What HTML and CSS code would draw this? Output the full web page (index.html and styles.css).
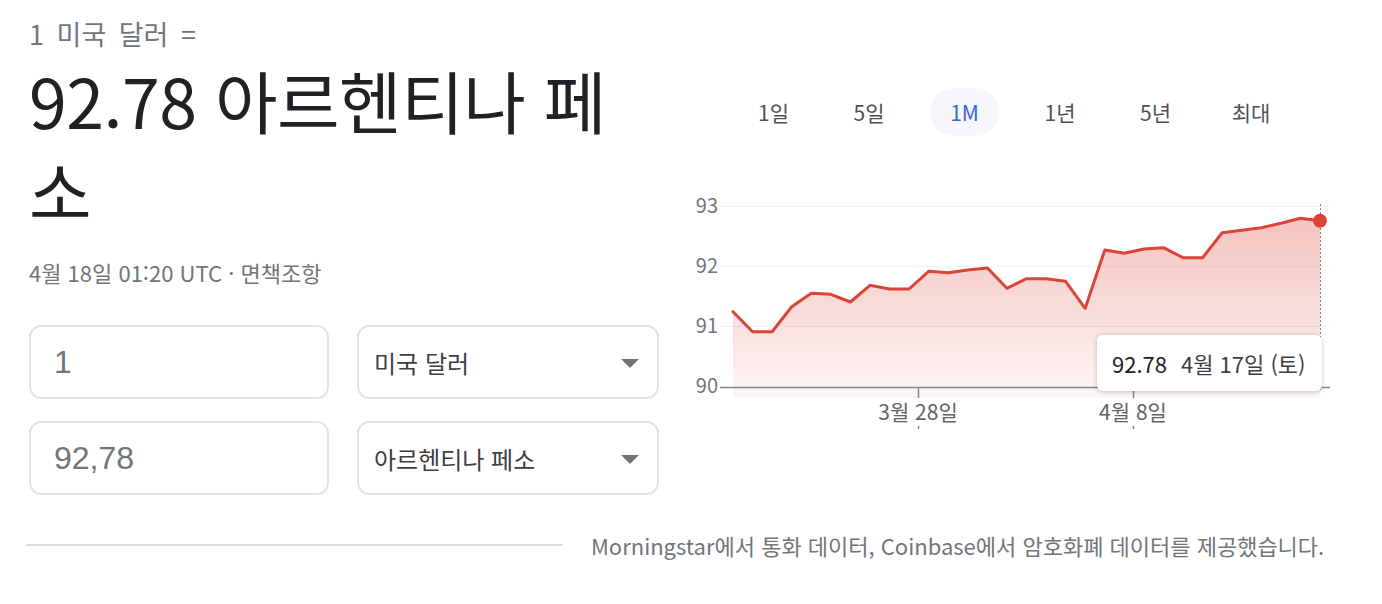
FILE: index.html
```html
<!DOCTYPE html>
<html lang="ko">
<head>
    <meta charset="UTF-8">
    <meta name="viewport" content="width=device-width, initial-scale=1.0">
    <title>환율</title>
    <link rel="stylesheet" href="styles.css">
</head>
<body>
    <div class="card">
        <div class="left">
            <div class="from-label">1 미국 달러 =</div>
            <h1 class="result">92.78 아르헨티나 페소</h1>
            <div class="updated">4월 18일 01:20 UTC · <span class="disclaimer">면책조항</span></div>

            <div class="converter">
                <div class="amount-box">1</div>
                <div class="currency-box">
                    <span>미국 달러</span>
                    <span class="caret"></span>
                </div>
                <div class="amount-box">92,78</div>
                <div class="currency-box">
                    <span>아르헨티나 페소</span>
                    <span class="caret"></span>
                </div>
            </div>
        </div>

        <div class="right">
            <div class="range-tabs">
                <div class="range-tab">1일</div>
                <div class="range-tab">5일</div>
                <div class="range-tab range-active">1M</div>
                <div class="range-tab">1년</div>
                <div class="range-tab">5년</div>
                <div class="range-tab">최대</div>
            </div>

            <div class="chart">
                <svg class="chart-svg" width="670" height="245" viewBox="680 190 670 245">
                    <defs>
                        <linearGradient id="areaFill" x1="0" y1="0" x2="0" y2="1">
                            <stop offset="0" stop-color="#db4437" stop-opacity="0.32"/>
                            <stop offset="1" stop-color="#db4437" stop-opacity="0.05"/>
                        </linearGradient>
                    </defs>

                    <line class="grid" x1="720" y1="206.5" x2="1330" y2="206.5"/>
                    <line class="grid" x1="720" y1="266.5" x2="1330" y2="266.5"/>
                    <line class="grid" x1="720" y1="326.5" x2="1330" y2="326.5"/>

                    <text class="axis-y" x="718" y="213">93</text>
                    <text class="axis-y" x="718" y="273">92</text>
                    <text class="axis-y" x="718" y="333">91</text>
                    <text class="axis-y" x="718" y="393">90</text>

                    <polygon fill="url(#areaFill)" points="733,398 733,311.7 752.6,331.7 772.1,331.7 791.7,306.7 811.3,293.3 830.8,294.3 850.4,302 870,285.3 889.5,289 909.1,289 928.7,271.3 948.2,272.7 967.8,270 987.4,268 1006.9,288.3 1026.5,278.7 1046.1,278.7 1065.6,281.3 1085.2,308.3 1104.8,250 1124.3,253.3 1143.9,249 1163.5,247.7 1183,257.7 1202.6,257.7 1222.2,232.7 1241.7,230.3 1261.3,227.7 1280.9,223.3 1300.4,218.3 1320,220.7 1320,398"/>

                    <line class="baseline" x1="720" y1="387.5" x2="1330" y2="387.5"/>
                    <line class="tick" x1="918.5" y1="387" x2="918.5" y2="398"/>
                    <line class="tick" x1="1133.5" y1="387" x2="1133.5" y2="398"/>
                    <line class="tick-dot" x1="918.5" y1="426" x2="918.5" y2="429"/>
                    <line class="tick-dot" x1="1133.5" y1="426" x2="1133.5" y2="429"/>

                    <text class="axis-x" x="918" y="420">3월 28일</text>
                    <text class="axis-x" x="1133" y="420">4월 8일</text>

                    <line class="cursor" x1="1320.5" y1="204" x2="1320.5" y2="390"/>

                    <polyline class="series" points="733,311.7 752.6,331.7 772.1,331.7 791.7,306.7 811.3,293.3 830.8,294.3 850.4,302 870,285.3 889.5,289 909.1,289 928.7,271.3 948.2,272.7 967.8,270 987.4,268 1006.9,288.3 1026.5,278.7 1046.1,278.7 1065.6,281.3 1085.2,308.3 1104.8,250 1124.3,253.3 1143.9,249 1163.5,247.7 1183,257.7 1202.6,257.7 1222.2,232.7 1241.7,230.3 1261.3,227.7 1280.9,223.3 1300.4,218.3 1320,220.7"/>
                    <circle cx="1320" cy="220.7" r="7" fill="#db4437"/>
                </svg>

                <div class="tooltip">
                    <span class="tooltip-value">92.78</span>
                    <span class="tooltip-date">4월 17일 (토)</span>
                </div>
            </div>
        </div>
    </div>

    <div class="footer">
        <div class="footer-rule"></div>
        <div class="footer-note">Morningstar에서 통화 데이터, Coinbase에서 암호화폐 데이터를 제공했습니다.</div>
    </div>
</body>
</html>
```

FILE: styles.css
```css
body {
    margin: 0;
    padding-bottom: 40px;
    background: #fff;
    font-family: "Noto Sans CJK KR", "Noto Sans", sans-serif;
    color: #202124;
}
.card {
    display: grid;
    grid-template-columns: 631px 1fr;
    column-gap: 20px;
    padding-left: 29px;
}
.left {
    display: flex;
    flex-direction: column;
}
.from-label {
    margin-top: 17px;
    font-size: 27px;
    line-height: 34px;
    color: #70757a;
    word-spacing: 5px;
}
.result {
    margin: 4px 0 0 0;
    max-width: 610px;
    font-size: 68px;
    font-weight: 400;
    line-height: 90px;
    color: #202124;
    letter-spacing: -0.5px;
}
.updated {
    margin-top: 23px;
    font-size: 22px;
    line-height: 28px;
    color: #70757a;
}
.converter {
    display: grid;
    grid-template-columns: 300px 302px;
    grid-auto-rows: 74px;
    column-gap: 28px;
    row-gap: 22px;
    margin-top: 39px;
}
.amount-box,
.currency-box {
    box-sizing: border-box;
    border: 2px solid #e2e4e7;
    border-radius: 12px;
    display: flex;
    align-items: center;
}
.amount-box {
    padding-left: 23px;
    font-family: "Liberation Sans", Arial, sans-serif;
    font-size: 32px;
    color: #70757a;
}
.currency-box {
    justify-content: space-between;
    padding: 0 18px 0 15px;
    font-size: 24px;
    color: #3c4043;
}
.caret {
    width: 0;
    height: 0;
    border-left: 9px solid transparent;
    border-right: 9px solid transparent;
    border-top: 9px solid #70757a;
    margin-top: 2px;
}
.right {
    display: flex;
    flex-direction: column;
}
.range-tabs {
    display: flex;
    gap: 26.5px;
    margin: 88px 0 0 59px;
}
.range-tab {
    width: 69px;
    height: 48px;
    border-radius: 24px;
    display: flex;
    align-items: center;
    justify-content: center;
    font-size: 21px;
    color: #4d5156;
}
.range-active {
    background: #f5f7fa;
    color: #3367d6;
}
.chart {
    position: relative;
    width: 670px;
    height: 245px;
    margin-top: 54px;
}
.chart-svg {
    display: block;
}
.grid {
    stroke: #f1f3f4;
    stroke-width: 1;
}
.baseline {
    stroke: #80868b;
    stroke-width: 1.5;
}
.tick,
.tick-dot {
    stroke: #80868b;
    stroke-width: 1.5;
}
.cursor {
    stroke: #80868b;
    stroke-width: 1;
    stroke-dasharray: 2 2;
}
.series {
    fill: none;
    stroke: #db4437;
    stroke-width: 3;
    stroke-linejoin: round;
    stroke-linecap: round;
}
.axis-y {
    font-size: 20px;
    fill: #70757a;
    text-anchor: end;
}
.axis-x {
    font-size: 21px;
    fill: #5f6368;
    text-anchor: middle;
}
.tooltip {
    position: absolute;
    left: 417px;
    top: 145px;
    width: 225px;
    height: 56px;
    box-sizing: border-box;
    background: #fff;
    border-radius: 6px;
    box-shadow: 0 1px 5px rgba(0, 0, 0, 0.22);
    display: flex;
    align-items: center;
    gap: 14px;
    padding-left: 15px;
    font-size: 22px;
}
.tooltip-value {
    color: #202124;
}
.tooltip-date {
    color: #3c4043;
}
.footer {
    display: flex;
    align-items: center;
    gap: 28px;
    margin-top: 35px;
    padding-left: 26px;
}
.footer-rule {
    width: 537px;
    height: 2px;
    background: #dadce0;
}
.footer-note {
    font-size: 22px;
    line-height: 30px;
    color: #70757a;
    white-space: nowrap;
}
```
